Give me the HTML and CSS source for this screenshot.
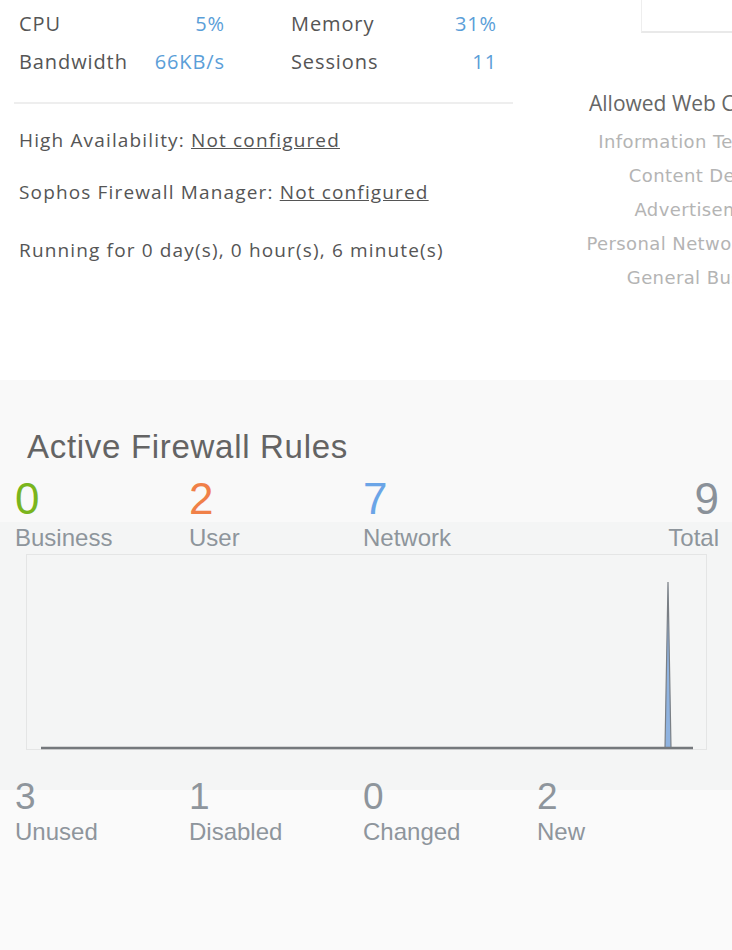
FILE: index.html
```html
<!DOCTYPE html>
<html lang="en">
<head>
    <meta charset="UTF-8">
    <meta name="viewport" content="width=device-width, initial-scale=1.0">
    <title>Control Center</title>
    <link rel="stylesheet" href="styles.css">
</head>
<body>
    <div class="top">
        <div class="system">
            <div class="stats">
                <div class="stat"><span>CPU</span><span class="value">5%</span></div>
                <div class="stat"><span>Memory</span><span class="value">31%</span></div>
                <div class="stat"><span>Bandwidth</span><span class="value">66KB/s</span></div>
                <div class="stat"><span>Sessions</span><span class="value">11</span></div>
            </div>
            <div class="divider"></div>
            <p class="info">High Availability: <a href="#">Not configured</a></p>
            <p class="info manager">Sophos Firewall Manager: <a href="#">Not configured</a></p>
            <p class="info">Running for 0 day(s), 0 hour(s), 6 minute(s)</p>
        </div>
        <div class="web">
            <div class="web-box"></div>
            <h3 class="web-title">Allowed Web Categories</h3>
            <ul class="web-list">
                <li>Information Technology</li>
                <li>Content Delivery</li>
                <li>Advertisements</li>
                <li>Personal Network Storage</li>
                <li>General Business</li>
            </ul>
        </div>
    </div>

    <div class="rules">
        <h2>Active Firewall Rules</h2>
        <div class="counts">
            <div class="count"><div class="num green">0</div><div class="label">Business</div></div>
            <div class="count"><div class="num orange">2</div><div class="label">User</div></div>
            <div class="count"><div class="num blue">7</div><div class="label">Network</div></div>
            <div class="count total"><div class="num grey">9</div><div class="label">Total</div></div>
        </div>
        <div class="chart">
            <svg width="681" height="196" viewBox="0 0 681 196">
                <path d="M639 194 L642 28 L645 194 Z" fill="#8fb3e0" stroke="#7a7f85" stroke-width="1.2"/>
                <line x1="15" y1="194" x2="667" y2="194" stroke="#74787c" stroke-width="2.5"/>
            </svg>
        </div>
        <div class="counts small">
            <div class="count"><div class="num">3</div><div class="label">Unused</div></div>
            <div class="count"><div class="num">1</div><div class="label">Disabled</div></div>
            <div class="count"><div class="num">0</div><div class="label">Changed</div></div>
            <div class="count"><div class="num">2</div><div class="label">New</div></div>
        </div>
    </div>
</body>
</html>
```

FILE: styles.css
```css
body {
    margin: 0;
    padding: 0;
    font-family: "Open Sans", Arial, sans-serif;
    background-color: #fafafa;
    overflow: hidden;
}

.top {
    display: flex;
    height: 380px;
    background-color: #fff;
}

.system {
    width: 520px;
    flex-shrink: 0;
}

.stats {
    display: grid;
    grid-template-columns: 206px 206px;
    column-gap: 66px;
    padding: 5px 0 0 19px;
}

.stat {
    display: flex;
    justify-content: space-between;
    font-size: 20px;
    line-height: 38px;
    letter-spacing: 0.9px;
    color: #555;
}

.stat .value {
    color: #5a9ed8;
}

.divider {
    margin: 21px 0 0 14px;
    width: 499px;
    height: 2px;
    background-color: #eee;
}

.info {
    margin: 21px 0 0 19px;
    font-size: 19px;
    line-height: 30px;
    letter-spacing: 1.15px;
    color: #555;
}

.info a {
    color: #555;
}

.manager {
    margin-top: 22px;
}

.manager + .info {
    margin-top: 28px;
}

.web {
    flex: 1;
    overflow: hidden;
    white-space: nowrap;
}

.web-box {
    margin-left: 121px;
    height: 31px;
    border-left: 1px solid #eee;
    border-bottom: 2px solid #e9e9e9;
}

.web-title {
    margin: 55px 0 0 69px;
    font-family: "Open Sans", sans-serif;
    font-weight: normal;
    font-size: 21px;
    line-height: 30px;
    color: #666;
}

.web-list {
    list-style: none;
    margin: 7px 0 0 38px;
    padding: 0;
    width: 300px;
    font-family: "DejaVu Sans", Verdana, sans-serif;
    font-size: 18px;
    line-height: 34px;
    letter-spacing: 0.4px;
    color: #b4b4b4;
    text-align: center;
}

.rules {
    font-family: "Liberation Sans", Arial, sans-serif;
    height: 570px;
    background: linear-gradient(#f9f9f9 0 142px, #f4f5f5 142px 410px, #fafafa 410px);
}

.rules h2 {
    margin: 0;
    padding: 48px 0 0 27px;
    font-weight: normal;
    font-size: 33px;
    line-height: 38px;
    letter-spacing: 0.7px;
    color: #646464;
}

.counts {
    display: grid;
    grid-template-columns: repeat(3, 174px) 1fr;
    padding: 10px 13px 0 15px;
}

.num {
    font-size: 44px;
    line-height: 46px;
}

.label {
    margin-top: 2px;
    font-size: 24px;
    line-height: 28px;
    color: #8e959c;
}

.total {
    text-align: right;
}

.green { color: #7ab51d; }
.orange { color: #f08048; }
.blue { color: #6ba5e7; }
.grey { color: #8a9199; }

.chart {
    margin: 2px 0 0 26px;
    width: 681px;
    height: 196px;
    border: 1px solid #e4e5e5;
    box-sizing: border-box;
}

.chart svg {
    display: block;
    margin: -1px 0 0 -1px;
}

.small {
    padding-top: 28px;
}

.small .num {
    font-size: 37px;
    line-height: 38px;
    color: #8e959c;
}
```
